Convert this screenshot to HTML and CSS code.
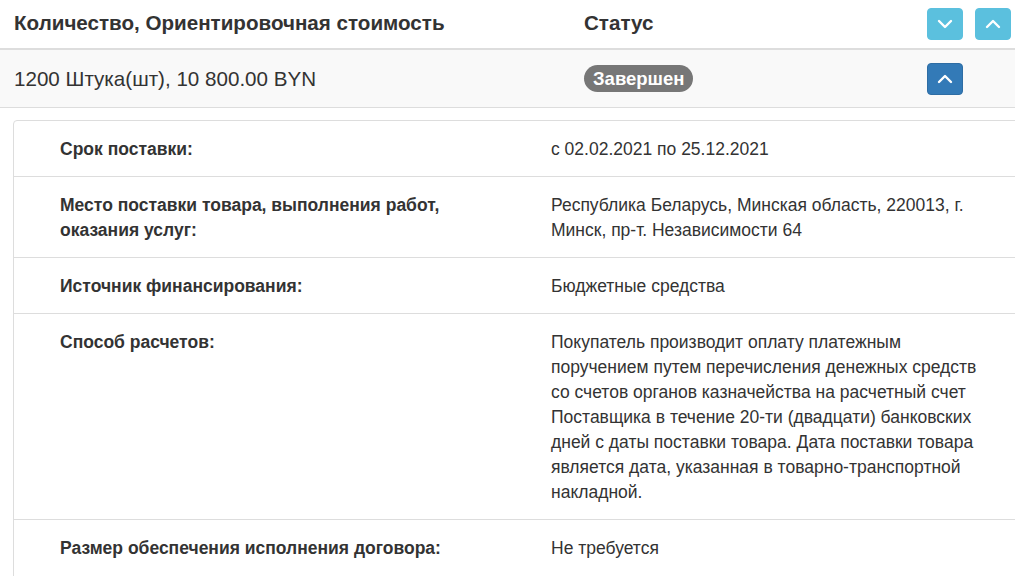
FILE: index.html
```html
<!DOCTYPE html>
<html lang="ru">
<head>
  <meta charset="UTF-8">
  <meta name="viewport" content="width=device-width, initial-scale=1.0">
  <title>Лот</title>
  <link rel="stylesheet" href="styles.css">
</head>
<body>
  <div class="lot-head">
    <div class="cell title">Количество, Ориентировочная стоимость</div>
    <div class="cell title">Статус</div>
    <div class="cell actions">
      <button class="btn btn-info" title="Развернуть все">
        <svg viewBox="0 0 18 18" width="18" height="18"><path d="M3 6l6 6 6-6" /></svg>
      </button>
      <button class="btn btn-info" title="Свернуть все">
        <svg viewBox="0 0 18 18" width="18" height="18"><path d="M3 12l6-6 6 6" /></svg>
      </button>
    </div>
  </div>

  <div class="lot-row">
    <div class="cell">1200 Штука(шт), 10 800.00 BYN</div>
    <div class="cell"><span class="badge">Завершен</span></div>
    <div class="cell actions">
      <button class="btn btn-primary" title="Свернуть">
        <svg viewBox="0 0 18 18" width="18" height="18"><path d="M3 12l6-6 6 6" /></svg>
      </button>
    </div>
  </div>

  <div class="details">
    <div class="detail">
      <div class="label">Срок поставки:</div>
      <div class="value">с 02.02.2021 по 25.12.2021</div>
    </div>
    <div class="detail">
      <div class="label">Место поставки товара, выполнения работ, оказания услуг:</div>
      <div class="value">Республика Беларусь, Минская область, 220013, г. Минск, пр-т. Независимости 64</div>
    </div>
    <div class="detail">
      <div class="label">Источник финансирования:</div>
      <div class="value">Бюджетные средства</div>
    </div>
    <div class="detail">
      <div class="label">Способ расчетов:</div>
      <div class="value">Покупатель производит оплату платежным поручением путем перечисления денежных средств со счетов органов казначейства на расчетный счет Поставщика в течение 20-ти (двадцати) банковских дней с даты поставки товара. Дата поставки товара является дата, указанная в товарно-транспортной накладной.</div>
    </div>
    <div class="detail">
      <div class="label">Размер обеспечения исполнения договора:</div>
      <div class="value">Не требуется</div>
    </div>
  </div>
</body>
</html>
```

FILE: styles.css
```css
body {
  font-family: 'Liberation Sans', Arial, sans-serif;
  color: #333;
  background-color: #fff;
  margin: 0;
  padding: 0;
  overflow: hidden;
}

/* header and lot row share the same three columns */
.lot-head,
.lot-row {
  display: grid;
  grid-template-columns: 570px 343px 1fr;
  align-items: center;
  font-size: 20.6px;
}

.cell {
  padding: 0 14px;
}

.lot-head {
  height: 48px;
  font-weight: bold;
  border-bottom: 2px solid #ddd;
}

.lot-head .title {
  padding-bottom: 3px;
}

.lot-row {
  height: 57px;
  background-color: #f9f9f9;
  border-bottom: 1px solid #ddd;
}

.actions {
  display: flex;
  gap: 12px;
}

.btn {
  width: 36px;
  height: 32px;
  border: 1px solid transparent;
  border-radius: 4px;
  padding: 0;
  display: flex;
  align-items: center;
  justify-content: center;
  cursor: pointer;
}

.btn svg {
  fill: none;
  stroke: #fff;
  stroke-width: 2.4;
  stroke-linecap: round;
  stroke-linejoin: round;
}

.btn-info {
  background-color: #5bc0de;
  border-color: #5bc0de;
}

.btn-primary {
  background-color: #337ab7;
  border-color: #2e6da4;
}

.badge {
  display: inline-block;
  background-color: #777;
  color: #fff;
  font-size: 18.5px;
  font-weight: bold;
  line-height: 27px;
  padding: 0 9px;
  border-radius: 14px;
}

.details {
  margin: 12px -30px 0 13px;
  border: 1px solid #ddd;
  border-radius: 4px;
  font-size: 17.5px;
}

.detail {
  display: grid;
  grid-template-columns: 491px 440px;
  line-height: 25px;
  padding: 16px 0 14px 46px;
  border-top: 1px solid #ddd;
}

.detail:first-child {
  border-top: none;
}

.detail:last-child {
  padding-bottom: 20px;
}

.label {
  font-weight: bold;
  padding-right: 60px;
}
```
